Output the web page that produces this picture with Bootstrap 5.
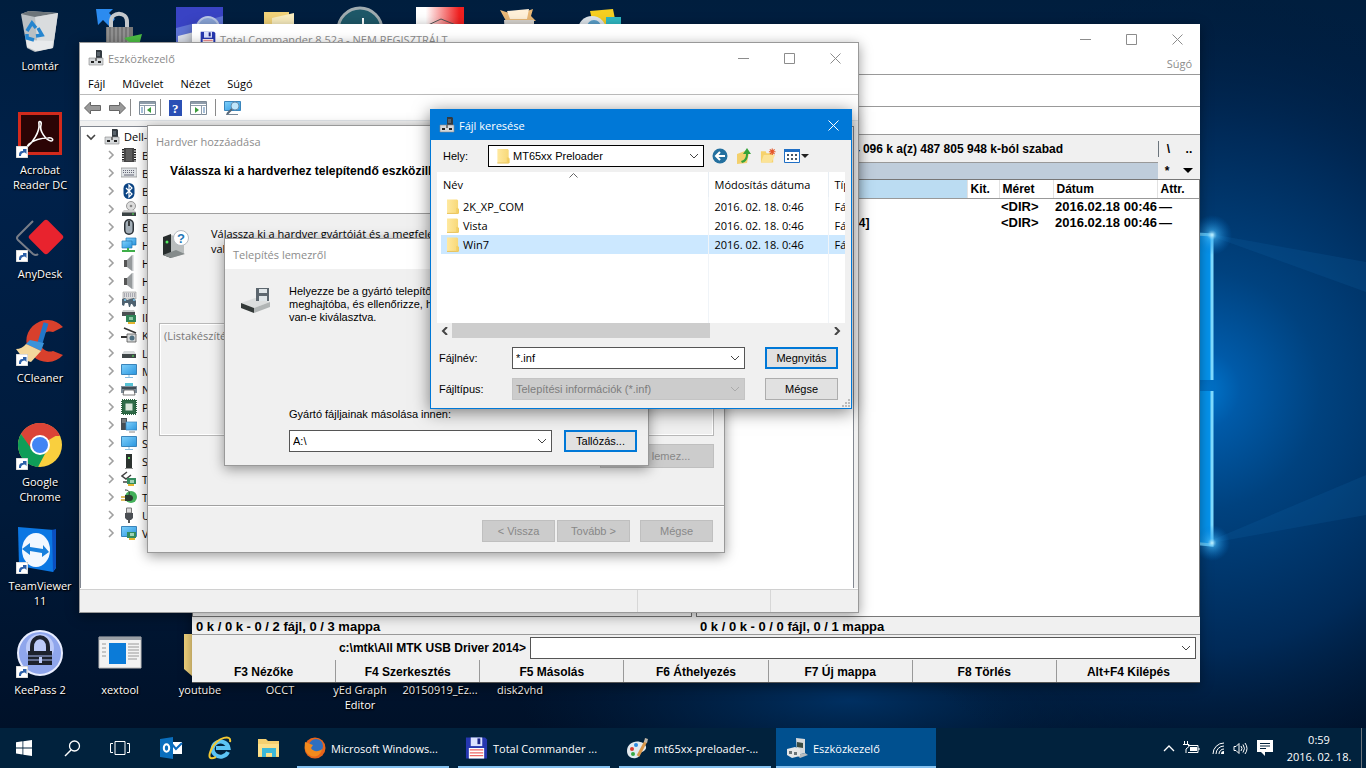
<!DOCTYPE html>
<html lang="hu">
<head>
<meta charset="utf-8">
<meta name="viewport" content="width=device-width, initial-scale=1">
<title>Asztal</title>
<link rel="stylesheet" href="https://cdn.jsdelivr.net/npm/bootstrap@5.3.0/dist/css/bootstrap.min.css">
<style>
  :root { --ui: "Open Sans", "Noto Sans", sans-serif; --classic: "Liberation Sans", sans-serif; --face: #f0f0f0; --accent: #0078d7; }
  body { font: 11px/15px var(--ui); color: #000; background: #001b3a; }
  button, select, input { font: inherit; color: inherit; border-radius: 0; }
  button { padding: 0; border: 0; background: none; }
  svg { flex: none; display: block; }
  .desktop { min-height: 0; }
  .classic { font-family: var(--classic); }
  .dim { color: #8c8c8c; }

  .wallpaper { z-index: 0; }
  .tiles { display: grid; grid-template-columns: repeat(8, 80px); grid-auto-rows: 104px; padding-top: 6px; }
  .tile { color: #fff; text-decoration: none; text-align: center; text-shadow: 0 1px 2px #000, 1px 1px 1px #000; }
  .tile svg { margin: 0 auto 4px; }

  .win { position: absolute; background: #fff; border: 1px solid #999; box-shadow: 0 3px 12px rgba(0,0,0,.4); display: flex; flex-direction: column; }
  .face { background: var(--face); }
  .titlebar { height: 30px; flex: none; display: flex; align-items: center; font: 11px/15px var(--ui); }
  .winbtn { width: 46px; height: 30px; display: grid; place-items: center; color: #8c8c8c; }

  .w-tc { left: 192px; right: 166px; top: 24px; bottom: 45px; border-color: #555; border-width: 0 0 1px; font: bold 12px/16px var(--classic); }
  .tc-menu { height: 20px; font: 11px/20px var(--ui); border-bottom: 1px solid #999; box-sizing: content-box; }
  .tc-bar { height: 31px; border-bottom: 1px solid #999; box-sizing: content-box; }
  .tc-bar2 { height: 27px; border-bottom: 1px solid #999; box-sizing: content-box; }
  .tc-drive { height: 27px; }
  .tc-free { padding-right: 95px; }
  .tc-path { height: 17px; }
  .tc-path > div:first-child { background: #bfcddb; border-top: 1px solid #999; }
  .tc-tools { width: 42px; }
  .tc-list { table-layout: fixed; width: 100%; border-collapse: collapse; line-height: 16px; }
  .tc-list th { height: 18px; padding: 0 0 0 3px; background: #fff; border-right: 1px solid #e2e2e2; border-bottom: 1px solid #999; }
  .tc-list th:first-child { background: #bbdcf2; }
  .tc-list td { padding: 0 0 0 2px; white-space: nowrap; font-size: 13px; }
  .tc-list td:first-child { font-size: 12px; padding-left: 23px; }
  .tc-pane { border: 1px solid #777; background: #fff; }
  .tc-status { height: 18px; border-bottom: 1px solid #999; font-size: 13px; line-height: 20px; }
  .tc-cmd { height: 25px; }
  .tc-cmd label { width: 338px; }
  .tc-cmd select { height: 22px; }
  .tc-keys { height: 22px; }
  .tc-keys button { flex: 1 1 0; border-right: 1px solid #999; height: 22px; padding-top: 2px; }
  .tc-keys button:last-child { border: 0; }

  .drop { appearance: none; border: 1px solid #555; background: #fff url("data:image/svg+xml,%3Csvg xmlns='http://www.w3.org/2000/svg' width='10' height='6'%3E%3Cpath d='M1 1l4 4 4-4' fill='none' stroke='%23444'/%3E%3C/svg%3E") no-repeat right 4px center; padding: 0 16px 0 3px; height: 22px; }
  .drop:disabled { background-color: #ccc; border-color: #c4c4c4; color: #7d7d7d; opacity: 1; background-image: url("data:image/svg+xml,%3Csvg xmlns='http://www.w3.org/2000/svg' width='10' height='6'%3E%3Cpath d='M1 1l4 4 4-4' fill='none' stroke='%23aaa'/%3E%3C/svg%3E"); }
  .push { height: 22px; width: 73px; background: #e1e1e1; border: 1px solid #adadad; text-align: center; }
  .push.main { border: 2px solid var(--accent); }
  .push:disabled { background: #ccc; border-color: #bfbfbf; color: #888; }

  .w-dev { left: 79px; top: 42px; width: 780px; }
  .dev-menu { height: 22px; border-bottom: 1px solid #bbb; gap: 17px; }
  .dev-tools { height: 25px; }
  .vsep { width: 1px; height: 17px; background: #8a8a8a; }
  .dev-body { padding-top: 5px; }
  .dev-tree { border: 1px solid #828790; border-bottom: 0; min-height: 462px; }
  .dev-tree ul { list-style: none; margin: 0; padding: 0; }
  .dev-tree li { height: 18px; display: flex; align-items: center; white-space: nowrap; gap: 5px; padding-left: 26px; }
  .dev-tree li svg + svg { margin-left: 1px; }
  .dev-tree li.root { height: 19px; padding-left: 2px; gap: 4px; }
  .dev-status { height: 23px; border-top: 1px solid #d0d0d0; margin-top: 1px; }
  .dev-status div { border-right: 1px solid #d7d7d7; }

  .w-hw { left: 147px; top: 125px; width: 578px; }
  .hw-head { height: 58px; padding-left: 22px; font: bold 12px/15px var(--classic); border-bottom: 1px solid #a0a0a0; }
  .hw-body { padding: 8px 10px 37px 11px; }
  .hw-text { height: 101px; }
  .hw-list { height: 113px; border: 1px solid #b8b8b8; outline: 1px solid #fff; outline-offset: -2px; color: #777; }
  .hw-wide { width: 114px; height: 24px; }
  .hw-foot { border-top: 1px solid #a0a0a0; box-shadow: inset 0 1px #fff; height: 47px; padding: 14px 11px 0 0; gap: 2px; }

  .w-disk { left: 224px; top: 238px; width: 425px; }
  .disk-body { padding: 16px 11px 13px 16px; }
  .disk-top { height: 122px; }
  .disk-top div { line-height: 13px; }
  .disk-src { width: 263px; }

  .w-file { left: 430px; top: 109px; width: 422px; border-color: var(--accent); box-shadow: 0 3px 16px rgba(0,0,0,.5); }
  .w-file .titlebar { background: var(--accent); color: #fff; }
  .f-bar { height: 32px; }
  .f-bar label { width: 45px; }
  .f-area { padding: 0 6px; }
  .f-list { background: #fff; height: 151px; overflow: hidden; padding-left: 4px; }
  .f-list table { table-layout: fixed; width: 100%; border-collapse: collapse; }
  .f-list th { font-weight: 400; height: 25px; padding: 0 0 0 6px; border-right: 1px solid #e8eef4; }
  .f-list th:first-child { padding-left: 2px; }
  .f-list td { height: 19px; padding: 0 0 0 6px; white-space: nowrap; overflow: hidden; line-height: 19px; }
  .f-list td:nth-child(1), .f-list td:nth-child(2) { border-right: 1px solid #f0f4f8; }
  .f-list tr.sel td { background: #cce8ff; }
  .f-list tr.rest td { height: 69px; }
  .f-sort { left: 132px; top: 1px; }
  .f-scroll { height: 15px; }
  .f-thumb { width: 258px; background: #cdcdcd; }
  .f-row { padding: 9px 13px 0 8px; }
  .f-row label { width: 73px; }
  .f-row select { width: 233px; }
  .f-look { height: 22px; width: 216px; border: 1px solid #000; background: #fff; }

  .taskbar { height: 40px; background: #01223d; color: #fff; z-index: 5; }
  .tb-i { width: 48px; height: 40px; display: grid; place-items: center; color: #fff; }
  .tb-pins { margin-left: 2px; }
  .tb-pins .tb-i { width: 49px; }
  .tb-w { width: 160px; height: 40px; padding: 0 0 0 11px; gap: 5px; display: flex; align-items: center; position: relative; text-align: left; white-space: nowrap; }
  .tb-w::after { content: ""; position: absolute; left: 4px; right: 4px; bottom: 0; height: 2px; background: #84c1f0; }
  .tb-w.active { background: #00508f; }
  .tb-w.active::after { left: 0; right: 0; }
  .tb-list { gap: 1px; }
  .clock { width: 76px; line-height: 17px; }
  .peek { width: 5px; }
</style>
</head>
<body class="vh-100 overflow-hidden d-flex flex-column">

<svg width="0" height="0" class="position-absolute" aria-hidden="true">
  <defs>
    <linearGradient id="gScr" x2="1" y2="1"><stop stop-color="#7fd0fb"/><stop offset="1" stop-color="#2b97e0"/></linearGradient>
    <linearGradient id="gFold" x2="1"><stop stop-color="#ffe9a0"/><stop offset="1" stop-color="#f7d774"/></linearGradient>
    <symbol id="link" viewBox="0 0 12 12"><path d="M0 0h12v12H0z" fill="#fff" stroke="#bbb"/><path d="M3 10c0-4 1-5 4-5V3h3.500v5L9 6.500C6 6.500 5 8 5 10z" fill="#2b5fa8"/></symbol>
    <symbol id="dev" viewBox="0 0 16 16"><path d="M8 0h5l1 1v7H8z" fill="#333a40"/><path d="M9 2h3v4H9z" fill="#59636b"/><path d="M1 8h14v7H1z" fill="#d5d8da" stroke="#888" stroke-width=".6"/><path d="M3 11h3v2H3zM10 11h3v2h-3z" fill="#222"/><path d="M7 8h2v3H7z" fill="#777"/></symbol>
    <symbol id="floppy" viewBox="0 0 24 24"><path d="M1 1h20l2 2v20H1z" fill="#2637b0"/><path d="M6 1h12v9H6z" fill="#dbe2ff"/><path d="M13 2h3v6h-3z" fill="#1b2588"/><path d="M4 12h16v11H4z" fill="#fff"/><path d="M5 14h14M5 17h14M5 20h14" stroke="#e66" stroke-width="1.300"/></symbol>
    <symbol id="fold" viewBox="0 0 13 17"><path d="M0 1h11l1 1v9h1v5H0z" fill="url(#gFold)"/><path d="M12 11v5H0" fill="none" stroke="#e6bf53"/><path d="M10 10h2v6h-2z" fill="#f2cf66"/></symbol>
    <symbol id="x" viewBox="0 0 11 11"><path d="M.5.5l10 10m0-10l-10 10" stroke="currentColor" fill="none"/></symbol>
    <symbol id="sq" viewBox="0 0 11 11"><path d="M.5.5h10v10H.5z" stroke="currentColor" fill="none"/></symbol>
    <symbol id="mn" viewBox="0 0 11 11"><path d="M0 5.500h11" stroke="currentColor"/></symbol>
    <symbol id="ch" viewBox="0 0 8 10"><path d="M2 1l4 4-4 4" stroke="#a0a0a0" stroke-width="1.600" fill="none"/></symbol>
    <symbol id="chip" viewBox="0 0 16 16"><path d="M3 1h10v14H3z" fill="#444"/><path d="M2 2v13M14 2v13" stroke="#222" stroke-width="2" stroke-dasharray="1.500 1"/><path d="M5 2h6v12H5z" fill="#5c5c5c"/></symbol>
    <symbol id="kbd" viewBox="0 0 16 16"><path d="M0 3h16v9H0z" fill="#dfe3e6" stroke="#888" stroke-width=".7"/><path d="M2 5.500h12M2 7.500h12" stroke="#667" stroke-dasharray="1 1"/><path d="M3 10h10" stroke="#667"/></symbol>
    <symbol id="bt" viewBox="0 0 16 16"><rect x="2.500" y="0" width="11" height="16" rx="5.500" fill="#0b4484"/><path d="M5 5l6 6-3 3V2l3 3-6 6" fill="none" stroke="#fff" stroke-width="1.200"/></symbol>
    <symbol id="dvd" viewBox="0 0 16 16"><circle cx="10" cy="5" r="4.500" fill="#ddd" stroke="#999"/><circle cx="10" cy="5" r="1.300" fill="#888"/><path d="M3 9h10l2 2v4H1v-4z" fill="#ccc"/><path d="M1 11.500h14V15H1z" fill="#3b4345"/><path d="M11 13h2" stroke="#5e5"/></symbol>
    <symbol id="mouse" viewBox="0 0 16 16"><rect x="3" y="0" width="10" height="16" rx="5" fill="#2c3238"/><rect x="4.500" y="1.500" width="7" height="13" rx="3.500" fill="#a4afb8"/><path d="M8 2v5" stroke="#222" stroke-width="1.600"/></symbol>
    <symbol id="net" viewBox="0 0 16 16"><path d="M5 1h10v7H5z" fill="url(#gScr)" stroke="#2779b5" stroke-width=".7"/><path d="M1 4h10v7H1z" fill="url(#gScr)" stroke="#2779b5" stroke-width=".7"/><path d="M1 14h13M7 11v3" stroke="#3fae49" stroke-width="2"/></symbol>
    <symbol id="spk" viewBox="0 0 16 16"><path d="M3 5h3v7H3z" fill="#555"/><path d="M6 5l5-5v16l-5-4z" fill="#969a9c"/><path d="M11 0h1.500v16H11z" fill="#c5c8ca"/></symbol>
    <symbol id="hid" viewBox="0 0 16 16"><path d="M2 1h13v7H2z" fill="#ddd" stroke="#999" stroke-width=".6"/><path d="M3 3h11M3 5h11" stroke="#778" stroke-dasharray="1 1"/><path d="M1 8l3-1 2 2 3-1 4-1 2 3v5l-2 1-2-3h-1l-1 3H8L7 12H4l-1 3-2-1z" fill="#4f6270"/><path d="M3 9h2M12 9h2" stroke="#7ecbf3" stroke-width="1.500"/></symbol>
    <symbol id="ide" viewBox="0 0 16 16"><path d="M1 3h13v4H1z" fill="#4b5053"/><path d="M2 1h11l1 2H1z" fill="#c9cccd"/><path d="M5 6h10v7H5z" fill="#2f8457"/><path d="M8 8h4v3H8z" fill="#8ec8a5"/><path d="M7 13h7v2H7z" fill="#e3b530"/></symbol>
    <symbol id="img" viewBox="0 0 16 16"><path d="M3 1l12 5" stroke="#333" stroke-width="1.500"/><path d="M0 10h6" stroke="#333" stroke-width="2"/><path d="M6 7h9v8H6z" fill="#d5d7d8" stroke="#555" stroke-width=".8"/><circle cx="11" cy="11" r="2.500" fill="#4d6e80"/></symbol>
    <symbol id="hdd" viewBox="0 0 16 16"><path d="M3 6h10l2 3H1z" fill="#d7dadb"/><path d="M1 9h14v4H1z" fill="#3f4648"/><path d="M11 11h2" stroke="#5e5"/></symbol>
    <symbol id="mon" viewBox="0 0 16 16"><path d="M.5 1.500h15v10H.5z" fill="url(#gScr)" stroke="#3a85bb"/><path d="M4 14.500h8M8 12v2" stroke="#88bde0"/></symbol>
    <symbol id="prn" viewBox="0 0 16 16"><path d="M4 2h8v4H4z" fill="#57c3d6"/><path d="M0 5h16v7H0z" fill="#7d8c98"/><path d="M1 6h14v2H1z" fill="#404c55"/><path d="M3 9h10l1 5H2z" fill="#fff" stroke="#444" stroke-width=".7"/></symbol>
    <symbol id="cpu" viewBox="0 0 16 16"><path d="M1 1h14v14H1z" fill="#28623f" stroke="#28623f" stroke-width="2" stroke-dasharray="1 1"/><path d="M2 2h12v12H2z" fill="#2f6b48"/><path d="M4.500 4.500h7v7h-7z" fill="#d9e6da"/></symbol>
    <symbol id="pc" viewBox="0 0 16 16"><path d="M0 1h6v12H0z" fill="#474e52"/><path d="M1 3h4M1 5h4" stroke="#aaa"/><path d="M5 5h11v8H5z" fill="url(#gScr)" stroke="#3a85bb" stroke-width=".7"/><path d="M8 15h6" stroke="#888"/></symbol>
    <symbol id="soft" viewBox="0 0 16 16"><path d="M5 1h6v14H5z" fill="#2c322f"/><path d="M7 4h2v2H7z" fill="#6be06b"/><path d="M4 15.500h8" stroke="#999"/></symbol>
    <symbol id="stor" viewBox="0 0 16 16"><path d="M6 1L1 5l4 3 5-4M2 11h5" fill="none" stroke="#444" stroke-width="1.500"/><path d="M6 7h9v6H6z" fill="#348c5e"/><path d="M9 9h4v3H9z" fill="#9fd3b5"/><path d="M7 13h6v2H7z" fill="#e3b530"/></symbol>
    <symbol id="plug" viewBox="0 0 16 16"><circle cx="10" cy="8" r="6" fill="#43b15a"/><path d="M4 1c4 0 5 2 4 5" stroke="#333" fill="none"/><path d="M4 6h5c4 0 4 6 0 6H4z" fill="#2b3b31"/><path d="M0 8h4M0 11h4" stroke="#d3a72c" stroke-width="1.500"/></symbol>
    <symbol id="usb" viewBox="0 0 16 16"><path d="M5.500 1h5v5h-5z" fill="#ddd" stroke="#777"/><path d="M4 6h8v5l-2 2H6l-2-2z" fill="#4b4f54"/><path d="M8 13v3" stroke="#555" stroke-width="2"/></symbol>
    <symbol id="gpu" viewBox="0 0 16 16"><path d="M.5 1.500h15v10H.5z" fill="url(#gScr)" stroke="#3a85bb"/><path d="M6 7h9v6H6z" fill="#348c5e"/><path d="M9 8h4v3H9z" fill="#9fd3b5"/><path d="M8 13h6v2H8z" fill="#e3b530"/></symbol>
  </defs>
</svg>

<main class="desktop position-relative flex-grow-1">
  <svg class="wallpaper position-absolute top-0 start-0 w-100 h-100" viewBox="0 0 1366 728" preserveAspectRatio="none" aria-hidden="true">
    <defs>
      <radialGradient id="w1" gradientUnits="userSpaceOnUse" cx="1200" cy="390" r="400"><stop stop-color="#0078d0"/><stop offset=".1" stop-color="#005aa8"/><stop offset=".3" stop-color="#00427f"/><stop offset=".65" stop-color="#002a58"/><stop offset="1" stop-color="#001b3a" stop-opacity="0"/></radialGradient>
      <linearGradient id="w2" x2="0" y2="1"><stop stop-color="#001e3e"/><stop offset=".25" stop-color="#00214a"/><stop offset=".7" stop-color="#001a3a"/><stop offset="1" stop-color="#001129"/></linearGradient>
      <radialGradient id="w3"><stop stop-color="#c9f4ff"/><stop offset=".25" stop-color="#3db4f8" stop-opacity=".6"/><stop offset="1" stop-color="#0078d7" stop-opacity="0"/></radialGradient>
      <radialGradient id="w4"><stop stop-color="#003062"/><stop offset="1" stop-color="#002448" stop-opacity="0"/></radialGradient>
    </defs>
    <path d="M0 0h1366v728H0z" fill="url(#w2)"/>
    <ellipse cx="850" cy="700" rx="330" ry="90" fill="url(#w4)"/>
    <path d="M800 0h566v728H800z" fill="url(#w1)"/>
    <path d="M1200 232l166 60v-30zM1200 545l166-70v40z" fill="#1c82cc" opacity=".12"/>
    <path d="M1180 233l33 2v145h-33zM1180 391h33v154l-33-2z" fill="#0594ee"/>
    <path d="M1180 233l32 2v145M1212 391v154l-32-3" fill="none" stroke="#7fdcff" stroke-width="3"/>
    <circle cx="1212" cy="235" r="20" fill="url(#w3)"/><circle cx="1212" cy="543" r="18" fill="url(#w3)"/>
  </svg>

  <nav class="tiles position-relative" aria-label="Asztali ikonok">
    <a href="#" class="tile"><svg width="48" height="48" viewBox="0 0 48 48"><path d="M5 8l8-3 29 2-5 35-18 4-8-4z" fill="#b9bfc3"/><path d="M5 8l14 3 23-4-29-2z" fill="#6d757a"/><path d="M19 11l23-4-5 35-15 3z" fill="#d9dcde"/><path d="M10 34l27 1-1 7-16 3-9-4z" fill="#e8eaec"/><path d="M11 25l5-8 4 5M22 22l4 7-6 1M18 34l-7-2v-4" fill="none" stroke="#2585cf" stroke-width="3.500"/></svg>Lomtár</a>
    <a href="#" class="tile" aria-label="Zár"><svg width="48" height="48" viewBox="0 0 48 48"><path d="M0 3h17l-4 4 6 6-6 7-6-6-5 5z" fill="#2b8bf0"/><path d="M15 24v-8c0-11 16-11 16 0v8" fill="none" stroke="#c4c8cc" stroke-width="4"/><path d="M10 21h27v24H10z" fill="#777"/><path d="M12 21v20m4-20v20m4-20v20m4-20v20m4-20v20m4-20v20" stroke="#aaa"/><path d="M28 32l18-4-4 15z" fill="#4cbe43"/></svg></a>
    <a href="#" class="tile" aria-label="Kép"><svg width="48" height="48" viewBox="0 0 48 48"><path d="M0 1h47v45H0z" fill="#5f74d6"/><path d="M0 1h47v9L0 22z" fill="#3943c4"/><circle cx="32" cy="22" r="11" fill="#8aa5d8" stroke="#bcc9e8" stroke-width="2"/><path d="M2 30l20-5 10 8v12H2z" fill="#dfe4ee"/></svg></a>
    <a href="#" class="tile" aria-label="Mappa"><svg width="48" height="48" viewBox="0 0 48 48"><path d="M8 6h25v38H8z" fill="#f2d37a"/><path d="M16 12l22-5v36H16z" fill="#faeec0"/></svg></a>
    <a href="#" class="tile" aria-label="Óra"><svg width="48" height="48" viewBox="0 0 48 48"><circle cx="24" cy="24" r="22" fill="#1e5868" stroke="#a0acb0" stroke-width="3"/><path d="M27 12v14" stroke="#fff" stroke-width="2"/></svg></a>
    <a href="#" class="tile" aria-label="Csomag"><svg width="48" height="48" viewBox="0 0 48 48"><defs><linearGradient id="rw" x2="1" y2="0"><stop offset=".2" stop-color="#fff"/><stop offset=".9" stop-color="#f02020"/></linearGradient></defs><path d="M0 1h48v46H0z" fill="url(#rw)"/><path d="M10 20l15-7 15 6" fill="none" stroke="#555"/></svg></a>
    <a href="#" class="tile" aria-label="Doboz"><svg width="48" height="48" viewBox="0 0 48 48"><path d="M4 4l15 5 18-6-2 7 5 5H10z" fill="#e9b877"/><path d="M11 5l22-2-2 10H14z" fill="#fff0d8"/><path d="M8 14h30v30H10z" fill="#d8d4cf"/></svg></a>
    <a href="#" class="tile" aria-label="Lemez"><svg width="48" height="48" viewBox="0 0 48 48"><path d="M14 5l23-2 4 20H18z" fill="#f6cf22"/><path d="M30 11h15v16H30z" fill="#30b9c4"/><circle cx="16" cy="24" r="14" fill="#dfe6ec"/><circle cx="18" cy="21" r="7" fill="#5a9fc9"/></svg></a>

    <a href="#" class="tile" style="grid-row:2;grid-column:1"><svg width="48" height="48" viewBox="0 0 48 48"><path d="M2 2h44v43H2z" fill="#d22a1c"/><path d="M5 5h38v37H5z" fill="#2b0405"/><path d="M12 36c4-3 12-14 11-22-1-4 3-3 2 1-2 6 5 15 10 16 3 0 2-4-3-3-8 0-14 2-19 6-2 2-2 4-1 2z" fill="none" stroke="#fff" stroke-width="1.600"/><use href="#link" x="0" y="36" width="12" height="12"/></svg>Acrobat<br>Reader DC</a>
    <a href="#" class="tile" style="grid-row:3;grid-column:1"><svg width="48" height="48" viewBox="0 0 48 48"><path d="M17 7L2 22q-2 2 0 4l15 14q3 2 5 0" fill="none" stroke="#777d88" stroke-width="2"/><rect x="17" y="10" width="26" height="26" rx="3" transform="rotate(45 30 23)" fill="#e8232e"/><use href="#link" x="0" y="36" width="12" height="12"/></svg>AnyDesk</a>
    <a href="#" class="tile" style="grid-row:4;grid-column:1"><svg width="48" height="48" viewBox="0 0 48 48"><path d="M47 9A21 21 0 1 0 47 37l-10-4a10 10 0 1 1 0-19z" fill="#d8402c"/><path d="M30 5l-6 20" stroke="#2277c8" stroke-width="5"/><path d="M14 22l14 3-3 8-15-7z" fill="#3a93da"/><path d="M10 26l15 7-10 11q-6 0-15-13 6 0 10-5z" fill="#f3d79c"/><use href="#link" x="0" y="36" width="12" height="12"/></svg>CCleaner</a>
    <a href="#" class="tile" style="grid-row:5;grid-column:1"><svg width="48" height="48" viewBox="0 0 48 48"><circle cx="24" cy="23" r="22" fill="#f9cf3e"/><path d="M24 23L5 12a22 22 0 0 1 38 0z" fill="#db4437"/><path d="M24 14h20a22 22 0 0 0-39-2l10 16z" fill="#db4437"/><path d="M5 12a22 22 0 0 0 17 33l9-17-14 1z" fill="#0f9d58"/><circle cx="24" cy="23" r="10" fill="#fff"/><circle cx="24" cy="23" r="8" fill="#4285f4"/><use href="#link" x="0" y="36" width="12" height="12"/></svg>Google<br>Chrome</a>
    <a href="#" class="tile" style="grid-row:6;grid-column:1"><svg width="48" height="48" viewBox="0 0 48 48"><path d="M2 1l36 3 2 38-3 4-34-6z" fill="#0b77e3"/><path d="M36 4l4-1v38l-3 5z" fill="#0a4fc0"/><ellipse cx="20" cy="24" rx="14" ry="17" fill="#f2f8ff"/><path d="M6 23l8-6v4l13 2v-4l6 7-7 5v-4l-12-2v4z" fill="#1880dd"/><use href="#link" x="0" y="36" width="12" height="12"/></svg>TeamViewer<br>11</a>
    <a href="#" class="tile" style="grid-row:7;grid-column:1"><svg width="48" height="48" viewBox="0 0 48 48"><circle cx="24" cy="23" r="22" fill="#8fa6ec" stroke="#e8edff" stroke-width="2"/><circle cx="24" cy="18" r="14" fill="#bccaf8"/><path d="M16 22v-5c0-13 16-13 16 0v5" fill="none" stroke="#1d222d" stroke-width="4"/><path d="M12 21h24v14H12z" fill="#1d222d"/><path d="M12 26h24M12 30h24" stroke="#a9b9f2"/><path d="M23 27h3v6h-3z" fill="#bccaf8"/><use href="#link" x="0" y="36" width="12" height="12"/></svg>KeePass 2</a>
    <a href="#" class="tile" style="grid-row:7;grid-column:2"><svg width="48" height="48" viewBox="0 0 48 48"><path d="M3 7h42v31H3z" fill="#f3f3f3" stroke="#bbb"/><path d="M3 7h42v3H3z" fill="#9aa0a6"/><path d="M13 13h17v21H13z" fill="#0b7bd8"/><path d="M32 14h11m-11 3h11m-11 3h11m-11 3h11m-11 3h11m-11 3h9M6 14h4m-4 4h4m-4 4h4m-4 4h4" stroke="#999"/></svg>xextool</a>
    <a href="#" class="tile" style="grid-row:7;grid-column:3"><svg width="48" height="48" viewBox="0 0 48 48"><path d="M8 4h30v42H16l-8-7z" fill="#f0d27c"/></svg>youtube</a>
    <a href="#" class="tile" style="grid-row:7;grid-column:4"><svg width="48" height="48"></svg>OCCT</a>
    <a href="#" class="tile" style="grid-row:7;grid-column:5"><svg width="48" height="48"></svg>yEd Graph<br>Editor</a>
    <a href="#" class="tile" style="grid-row:7;grid-column:6"><svg width="48" height="48"></svg>20150919_Ez...</a>
    <a href="#" class="tile" style="grid-row:7;grid-column:7"><svg width="48" height="48"></svg>disk2vhd</a>
  </nav>

  <!-- Total Commander -->
  <section class="win w-tc face">
    <div class="titlebar bg-white dim ps-2"><svg class="me-1" width="16" height="16"><use href="#floppy"/></svg><span class="flex-grow-1">Total Commander 8.52a - NEM REGISZTRÁLT</span>
      <button class="winbtn" aria-label="Kis méret"><svg width="11" height="11"><use href="#mn"/></svg></button><button class="winbtn" aria-label="Teljes méret"><svg width="11" height="11"><use href="#sq"/></svg></button><button class="winbtn" aria-label="Bezárás"><svg width="11" height="11"><use href="#x"/></svg></button></div>
    <div class="tc-menu bg-white dim text-end pe-2">Súgó</div>
    <div class="tc-bar bg-white"></div>
    <div class="tc-bar2 bg-white"></div>
    <div class="d-flex flex-grow-1">
      <div class="w-50 d-flex flex-column pe-1"><div class="tc-drive"></div><div class="tc-path d-flex"><div class="flex-grow-1"></div></div><div class="tc-pane flex-grow-1"></div></div>
      <div class="w-50 d-flex flex-column">
        <div class="tc-drive d-flex align-items-center"><div class="tc-free flex-grow-1 text-end">[_nincs_] 425 234 096 k a(z) 487 805 948 k-ból szabad</div><div class="tc-tools d-flex justify-content-around border-start border-secondary"><span>\</span><span>..</span></div></div>
        <div class="tc-path d-flex"><div class="flex-grow-1"></div><div class="tc-tools d-flex justify-content-around align-items-center"><span>*</span><svg width="10" height="5"><path d="M0 0h10L5 5z"/></svg></div></div>
        <div class="tc-pane flex-grow-1">
          <table class="tc-list">
            <colgroup><col><col style="width:32px"><col style="width:54px"><col style="width:104px"><col style="width:42px"></colgroup>
            <thead><tr><th>Név</th><th>Kit.</th><th>Méret</th><th>Dátum</th><th class="border-end-0">Attr.</th></tr></thead>
            <tbody><tr><td>[..]</td><td></td><td>&lt;DIR&gt;</td><td>2016.02.18 00:46</td><td>—</td></tr>
            <tr><td>[All MTK USB Driver 2014]</td><td></td><td>&lt;DIR&gt;</td><td>2016.02.18 00:46</td><td>—</td></tr></tbody>
          </table>
        </div>
      </div>
    </div>
    <div class="tc-status d-flex"><div class="w-50 ps-1">0 k / 0 k - 0 / 2 fájl, 0 / 3 mappa</div><div class="w-50 ps-1">0 k / 0 k - 0 / 0 fájl, 0 / 1 mappa</div></div>
    <div class="tc-cmd d-flex align-items-center"><label for="cmd" class="text-end pe-1">c:\mtk\All MTK USB Driver 2014&gt;</label><select id="cmd" class="drop flex-grow-1 me-1"><option></option></select></div>
    <div class="tc-keys d-flex"><button>F3 Nézőke</button><button>F4 Szerkesztés</button><button>F5 Másolás</button><button>F6 Áthelyezés</button><button>F7 Új mappa</button><button>F8 Törlés</button><button>Alt+F4 Kilépés</button></div>
  </section>

  <!-- Eszközkezelő -->
  <section class="win w-dev">
    <div class="titlebar dim ps-2"><svg class="me-1" width="16" height="16"><use href="#dev"/></svg><span class="flex-grow-1">Eszközkezelő</span>
      <button class="winbtn" aria-label="Kis méret"><svg width="11" height="11"><use href="#mn"/></svg></button><button class="winbtn" aria-label="Teljes méret"><svg width="11" height="11"><use href="#sq"/></svg></button><button class="winbtn" aria-label="Bezárás"><svg width="11" height="11"><use href="#x"/></svg></button></div>
    <div class="dev-menu d-flex align-items-center ps-2"><button>Fájl</button><button>Művelet</button><button>Nézet</button><button>Súgó</button></div>
    <div class="dev-tools d-flex align-items-center ps-1">
      <button aria-label="Vissza"><svg width="17" height="14" viewBox="0 0 17 14"><path d="M.5 7l6-6v3.500h10v5h-10V13z" fill="#999" stroke="#666"/></svg></button>
      <button class="ms-1 ps-1" aria-label="Előre"><svg width="17" height="14" viewBox="0 0 17 14"><path d="M16.500 7l-6-6v3.500H.5v5h10V13z" fill="#999" stroke="#666"/></svg></button>
      <div class="vsep ms-1 me-2"></div>
      <button aria-label="Konzolfa"><svg width="17" height="14" viewBox="0 0 17 14"><path d="M.5.5h16v13H.5z" fill="#fff" stroke="#7d8a96"/><path d="M1 2h15" stroke="#8f9dab" stroke-width="2"/><path d="M1 4.500h15M5.500 5v9" stroke="#8f9dab"/><path d="M12 6v6L8 9z" fill="#3a9c3a"/><path d="M2 7h2m-2 2h2m-2 2h2" stroke="#4c7fb0"/></svg></button>
      <div class="vsep mx-1"></div>
      <button class="mx-1" aria-label="Súgó"><svg width="13" height="16" viewBox="0 0 13 16"><path d="M0 0h13v16H0z" fill="#2b50b5"/><text x="3" y="13" fill="#fff" font-size="13" font-weight="bold" font-family="Liberation Serif">?</text></svg></button>
      <button class="ms-1 me-1" aria-label="Műveletpanel"><svg width="17" height="14" viewBox="0 0 17 14"><path d="M.5.5h16v13H.5z" fill="#fff" stroke="#7d8a96"/><path d="M1 2h15" stroke="#8f9dab" stroke-width="2"/><path d="M1 4.500h15M11.500 5v9" stroke="#8f9dab"/><path d="M5 6v6l4-3z" fill="#3a9c3a"/><path d="M13 7h2m-2 2h2m-2 2h2" stroke="#4c7fb0"/></svg></button>
      <div class="vsep ms-1 me-2"></div>
      <button aria-label="Hardverváltozások keresése"><svg width="17" height="16" viewBox="0 0 17 16"><path d="M.5 1.500h16v9H.5z" fill="url(#gScr)" stroke="#3a85bb"/><path d="M2 14.500h12" stroke="#789"/><circle cx="11" cy="6" r="4" fill="#bfe6fb" stroke="#6b8fae"/><path d="M8 9l-5 5" stroke="#567" stroke-width="2"/></svg></button>
    </div>
    <div class="dev-body face border-top pe-1"><div class="dev-tree bg-white">
      <ul>
        <li class="root"><svg width="16" height="12" viewBox="0 0 16 12"><path d="M4 4l4 4 4-4" fill="none" stroke="#444" stroke-width="1.600"/></svg><svg width="16" height="16"><use href="#dev"/></svg>Dell-PC</li>
      </ul>
      <ul id="devices"></ul>
    </div></div>
    <div class="dev-status face d-flex"><div style="width:558px"></div><div style="width:133px"></div></div>
  </section>

  <!-- Hardver hozzáadása -->
  <section class="win w-hw">
    <div class="titlebar dim ps-2">Hardver hozzáadása</div>
    <div class="hw-head pt-2">Válassza ki a hardverhez telepítendő eszközillesztőt.</div>
    <div class="hw-body face">
      <div class="hw-text d-flex pt-1">
        <svg class="ms-1 mt-1" width="32" height="32" viewBox="0 0 32 32"><path d="M0 7l8-3v24l-8-3z" fill="#272d2d"/><path d="M8 5l13 4v15L8 28z" fill="#b9bdbd"/><path d="M0 25l8 3 14-4-9-4z" fill="#858b8b"/><circle cx="4" cy="12" r="1.500" fill="#55ec61"/><circle cx="18" cy="8" r="7.500" fill="#fff" stroke="#b4bac0"/><text x="14" y="13" font-size="13" font-weight="bold" fill="#2577b8" font-family="Liberation Sans">?</text></svg>
        <div class="ms-3">Válassza ki a hardver gyártóját és a megfelelő modellt,<br>valamint kattintson a Tovább gombra.</div>
      </div>
      <div class="hw-list p-1">(Listakészítés folyamatban...)</div>
      <div class="d-flex justify-content-end pt-2 classic"><button class="push hw-wide" disabled>Saját lemez...</button></div>
    </div>
    <div class="hw-foot face classic d-flex justify-content-end align-items-start"><button class="push" disabled>&lt; Vissza</button><button class="push" disabled>Tovább &gt;</button><button class="push ms-2" disabled>Mégse</button></div>
  </section>

  <!-- Telepítés lemezről -->
  <section class="win w-disk">
    <div class="titlebar dim ps-2">Telepítés lemezről</div>
    <div class="disk-body face classic">
      <div class="disk-top d-flex">
        <svg width="32" height="32" viewBox="0 0 32 32"><path d="M0 18l14-5 15 4-16 6z" fill="#dcdede"/><path d="M0 18l13 5v5L0 23z" fill="#333938"/><path d="M13 23l16-6v5l-16 6z" fill="#b1b5b5"/><path d="M15 3h13v13H15z" fill="#5c666e"/><path d="M18 4h8v4h-8zM18 11h8v5h-8z" fill="#dfe5e8"/></svg>
        <div class="ms-3">Helyezze be a gyártó telepítőlemezét a kijelölt<br>meghajtóba, és ellenőrizze, hogy a meghajtó<br>van-e kiválasztva.</div>
      </div>
      <div class="ms-5"><label for="src" class="d-block">Gyártó fájljainak másolása innen:</label>
        <div class="d-flex justify-content-between pt-2"><select id="src" class="drop disk-src"><option>A:\</option></select><button class="push main">Tallózás...</button></div></div>
    </div>
  </section>

  <!-- Fájl keresése -->
  <section class="win w-file face">
    <div class="titlebar ps-2"><svg class="me-1" width="16" height="16"><use href="#dev"/></svg><span class="flex-grow-1">Fájl keresése</span><button class="text-white pe-2 me-1" aria-label="Bezárás"><svg width="11" height="11"><use href="#x"/></svg></button></div>
    <div class="f-bar d-flex align-items-center classic ps-2"><label for="look" class="ms-1">Hely:</label>
      <div class="f-look d-flex align-items-center ps-2"><svg width="13" height="16"><use href="#fold"/></svg><select id="look" class="drop border-0 flex-grow-1 h-100"><option>MT65xx Preloader</option></select></div>
      <button class="ms-2" aria-label="Vissza"><svg width="16" height="16" viewBox="0 0 16 16"><circle cx="8" cy="8" r="7.500" fill="#24709f"/><path d="M13 8H4m4-4L4 8l4 4" fill="none" stroke="#fff" stroke-width="2"/></svg></button>
      <button class="ms-2" aria-label="Fel"><svg width="16" height="16" viewBox="0 0 16 16"><path d="M1 6l8-3 4 2-2 10-10 1z" fill="#f3d06c"/><path d="M5 13c4-1 5-4 5-7H7l4-6 4 6h-3c0 5-2 8-6 9z" fill="#36a33a"/></svg></button>
      <button class="ms-2" aria-label="Új mappa"><svg width="16" height="16" viewBox="0 0 17 16"><path d="M1 3h5l1 2h7v10H1z" fill="#f6d26c"/><path d="M4 7h12l-4 8H1z" fill="#fbe397"/><path d="M13 0v7M9.500 3.500h7M10.500 1l5 5m0-5l-5 5" stroke="#e4572a" stroke-width="1.200"/></svg></button>
      <button class="ms-2" aria-label="Nézet"><svg width="25" height="14" viewBox="0 0 25 14"><path d="M.5.5h15v13H.5z" fill="#fff" stroke="#1f6fc5"/><path d="M0 1.500h16" stroke="#1f6fc5" stroke-width="3"/><path d="M3 6h10M3 10h10" stroke="#456" stroke-width="2" stroke-dasharray="2 2"/><path d="M17 5h8l-4 4z" fill="#222"/></svg></button>
    </div>
    <div class="f-area">
      <div class="f-list position-relative">
        <svg class="f-sort position-absolute" width="9" height="5"><path d="M.5 4.500l4-4 4 4" fill="none" stroke="#666"/></svg>
        <table>
          <colgroup><col style="width:267px"><col style="width:120px"><col></colgroup>
          <thead><tr><th>Név</th><th>Módosítás dátuma</th><th class="border-end-0 text-nowrap overflow-hidden">Típus</th></tr></thead>
          <tbody>
            <tr><td><span class="d-flex align-items-center gap-1"><svg width="12" height="17"><use href="#fold"/></svg>2K_XP_COM</span></td><td>2016. 02. 18. 0:46</td><td>Fájlmappa</td></tr>
            <tr><td><span class="d-flex align-items-center gap-1"><svg width="12" height="17"><use href="#fold"/></svg>Vista</span></td><td>2016. 02. 18. 0:46</td><td>Fájlmappa</td></tr>
            <tr class="sel"><td><span class="d-flex align-items-center gap-1"><svg width="12" height="17"><use href="#fold"/></svg>Win7</span></td><td>2016. 02. 18. 0:46</td><td>Fájlmappa</td></tr>
            <tr class="rest"><td></td><td></td><td></td></tr>
          </tbody>
        </table>
      </div>
      <div class="f-scroll d-flex align-items-stretch justify-content-between px-1"><svg class="mt-1" width="7" height="8"><path d="M6 0L2 4l4 4" fill="none" stroke="#444" stroke-width="2"/></svg><div class="f-thumb me-auto ms-1"></div><svg class="mt-1" width="7" height="8"><path d="M1 0l4 4-4 4" fill="none" stroke="#444" stroke-width="2"/></svg></div>
    </div>
    <div class="f-row classic d-flex"><label for="fname" class="pt-1">Fájlnév:</label><select id="fname" class="drop"><option>*.inf</option></select><button class="push main ms-auto">Megnyitás</button></div>
    <div class="f-row classic d-flex pb-2"><label for="ftype" class="pt-1">Fájltípus:</label><select id="ftype" class="drop" disabled><option>Telepítési információk (*.inf)</option></select><button class="push ms-auto">Mégse</button></div>
    <svg class="position-absolute bottom-0 end-0" width="9" height="9"><path d="M6 1h2M3 4h5M0 7h8" stroke="#bbb" stroke-width="2" stroke-dasharray="2 1"/></svg>
  </section>
</main>

<footer class="taskbar d-flex align-items-center flex-shrink-0">
  <button class="tb-i" aria-label="Start"><svg width="16" height="16" viewBox="0 0 16 16"><path d="M0 2.300l6.500-1v6.200H0zM7.300 1.200L16 0v7.500H7.300zM0 8.400h6.500v6.200l-6.500-1zM7.300 8.400H16V16l-8.700-1.300z" fill="#fff"/></svg></button>
  <button class="tb-i" aria-label="Keresés"><svg width="17" height="17" viewBox="0 0 17 17"><circle cx="10.500" cy="6" r="5" fill="none" stroke="#fff" stroke-width="1.300"/><path d="M7 10l-6 6" stroke="#fff" stroke-width="1.500"/></svg></button>
  <button class="tb-i" aria-label="Feladatnézet"><svg width="20" height="14" viewBox="0 0 20 14"><path d="M5 .5h10v13H5zM3 2.500H.5v9H3M17 2.500h2.500v9H17" fill="none" stroke="#fff"/></svg></button>
  <div class="tb-pins d-flex">
    <button class="tb-i" aria-label="Outlook"><svg width="24" height="24" viewBox="0 0 24 24"><path d="M12 6h11v12H12z" fill="#fff"/><path d="M12 7l5 6 6-6" fill="none" stroke="#0b6bc0" stroke-width="2"/><path d="M1 3l13-2v22L1 21z" fill="#0a6ebd"/><ellipse cx="7.500" cy="12" rx="2.700" ry="3.700" fill="none" stroke="#fff" stroke-width="2"/></svg></button>
    <button class="tb-i" aria-label="Internet Explorer"><svg width="24" height="24" viewBox="0 0 24 24"><path d="M20 16a8 7.500 0 1 1 .5-4H8" fill="none" stroke="#5cc4f4" stroke-width="4"/><path d="M22 6C24-2 10 1 4 12-1 22 2 24 8 21" fill="none" stroke="#f3c832" stroke-width="2"/></svg></button>
    <button class="tb-i" aria-label="Fájlkezelő"><svg width="24" height="20" viewBox="0 0 24 20"><path d="M1 1h8l2 2h11v16H1z" fill="#f5d070"/><path d="M1 6h21v12H1z" fill="#fde08a"/><path d="M5 19v-9h14v9h-4v-4H9v4z" fill="#3bb8d8"/></svg></button>
  </div>
  <div class="tb-list d-flex flex-grow-1">
    <button class="tb-w"><svg width="22" height="22" viewBox="0 0 22 22"><circle cx="11" cy="11" r="10.500" fill="#e8641b"/><circle cx="12" cy="9" r="7" fill="#2f6fc0"/><path d="M1 5c3 1 5 2 8 3l-2 3c2 4 8 4 11 1-1 6-6 9-11 7C2 17 0 12 1 5z" fill="#f28a1d"/></svg>Microsoft Windows...</button>
    <button class="tb-w"><svg width="23" height="24"><use href="#floppy"/></svg>Total Commander ...</button>
    <button class="tb-w"><svg width="23" height="22" viewBox="0 0 23 22"><path d="M1 14C1 6 10 2 17 6c6 4 2 8-1 9s-1 5-6 6-9-2-9-7z" fill="#e3e9ee"/><circle cx="6" cy="12" r="2" fill="#da3b2f"/><circle cx="10" cy="8" r="2" fill="#2e8be0"/><circle cx="7" cy="17" r="2" fill="#38a845"/><path d="M12 19l8-15" stroke="#d9974a" stroke-width="3"/><path d="M18 5l1-4 3 1-1 4z" fill="#bfb6a8"/></svg>mt65xx-preloader-...</button>
    <button class="tb-w active"><svg width="21" height="22" viewBox="0 0 21 22"><path d="M9 1l9 1v14l-8 2z" fill="#d5d9db"/><path d="M10 5l6 1v5l-6-1z" fill="#3b4c42"/><path d="M10 18l8-2 3 2-8 3z" fill="#b8bcbe"/><path d="M0 12l8-2 5 2v7l-8 2-5-3z" fill="#e4e6e7"/><path d="M2 14h3v3H2zM7 15h3v3H7z" fill="#6a7478"/></svg>Eszközkezelő</button>
  </div>
  <div class="d-flex align-items-center gap-2">
    <svg width="12" height="7"><path d="M1 6l5-5 5 5" fill="none" stroke="#fff" stroke-width="1.300"/></svg>
    <svg width="17" height="14" viewBox="0 0 17 14"><path d="M5 4.500h10v7H5M16 7v2M1.500 0v3M4.500 0v3M0 3.500h6v2L3 8v4" fill="none" stroke="#fff"/><path d="M7 6h7v4H7z" fill="#fff"/></svg>
    <svg class="ms-1" width="13" height="13" viewBox="0 0 13 13"><path d="M1 12A11 11 0 0 1 12 1M4 12a8 8 0 0 1 8-8M7 12a5 5 0 0 1 5-5" fill="none" stroke="#fff"/><path d="M9 12a3 3 0 0 1 3-3v3z" fill="#fff"/></svg>
    <svg width="16" height="13" viewBox="0 0 16 13"><path d="M1 4.500h2l3-3v10l-3-3H1z" fill="none" stroke="#fff"/><path d="M8 4q2 2.500 0 5M10 2.500q3 4 0 8M12 1q4 5.500 0 11" fill="none" stroke="#fff"/></svg>
    <svg class="me-1" width="16" height="16" viewBox="0 0 16 16"><path d="M0 0h16v12H8v4l-4-4H0z" fill="#fff"/><path d="M3 3.500h10M3 6h10M3 8.500h6" stroke="#01223d"/></svg>
  </div>
  <div class="clock text-center text-nowrap ms-1">0:59<br>2016. 02. 18.</div>
  <div class="peek align-self-stretch border-start border-secondary ms-1"></div>
</footer>

<script src="https://cdn.jsdelivr.net/npm/bootstrap@5.3.0/dist/js/bootstrap.bundle.min.js"></script>
<script>
  const devices = [["chip","Belső vezérlőprogram"],["kbd","Billentyűzetek"],["bt","Bluetooth"],["dvd","DVD/CD-ROM-meghajtók"],["mouse","Egér és más mutatóeszközök"],["net","Hálózati adapterek"],["spk","Hang-, video- és játékvezérlők"],["spk","Hangbemenetek"],["hid","HID-eszközök"],["ide","IDE ATA/ATAPI-vezérlők"],["img","Képalkotó eszközök"],["hdd","Lemezmeghajtók"],["mon","Monitorok"],["prn","Nyomtatási várólisták"],["cpu","Processzorok"],["pc","Rendszereszközök"],["mon","Számítógép"],["soft","Szoftvereszközök"],["stor","Tárolóvezérlők"],["plug","Tulajdonosi eszközök"],["usb","USB-vezérlők"],["gpu","Videokártyák"]];
  document.getElementById("devices").innerHTML = devices.map(([icon, name]) =>
    `<li><svg width="8" height="10"><use href="#ch"/></svg><svg width="16" height="16"><use href="#${icon}"/></svg>${name}</li>`).join("");
</script>
</body>
</html>
